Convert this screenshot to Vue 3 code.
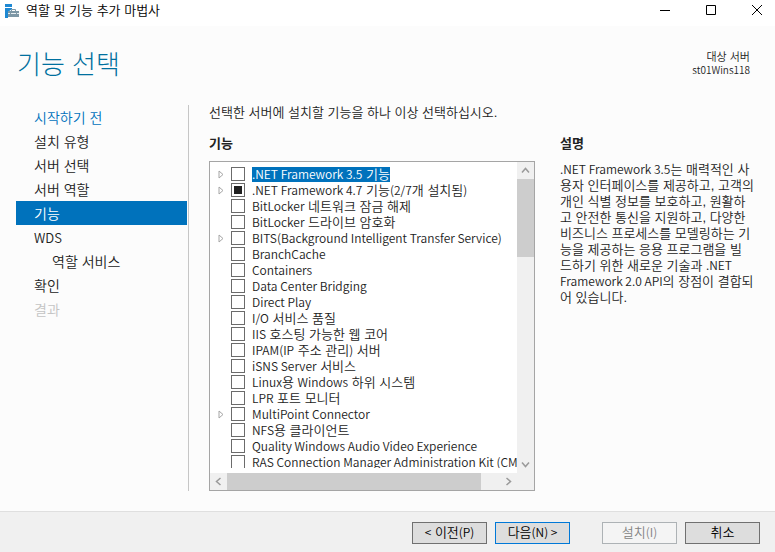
<template>
  <div class="wizard">
    <header class="title-bar">
      <svg class="app-icon" viewBox="0 0 15 15" aria-hidden="true">
        <path d="M0 0h7v3H0z" fill="#1e88d2" />
        <path d="M0 4h7v1L3 8v6H0z" fill="#1e88d2" />
        <path d="M6.500 7.500V5.500h4v2" fill="none" stroke="#7d97a5" />
        <path d="M3 7h11v6H3z" fill="#7d97a5" />
        <path d="M3 9.500h2M6 9.500h5M12 9.500h2" stroke="#e6edf0" />
      </svg>
      <span class="window-title">역할 및 기능 추가 마법사</span>
      <div class="window-controls">
        <button type="button" aria-label="최소화">
          <svg viewBox="0 0 12 12"><path d="M1 6.500h10" /></svg>
        </button>
        <button type="button" aria-label="최대화">
          <svg viewBox="0 0 12 12"><path d="M1.500 1.500h9v9h-9z" /></svg>
        </button>
        <button type="button" aria-label="닫기">
          <svg viewBox="0 0 12 12"><path d="M1 1l10 10M11 1L1 11" /></svg>
        </button>
      </div>
    </header>

    <div class="page-header">
      <h1>기능 선택</h1>
      <div class="target-server">
        <div>대상 서버</div>
        <div class="server-name">st01Wins118</div>
      </div>
    </div>

    <main class="content">
      <nav class="steps">
        <a
          v-for="step in steps"
          :key="step.name"
          href="#"
          class="step"
          :class="step.state"
          @click.prevent
        ><span v-for="(run, i) in toRuns(step.name)" :key="i" :class="run.script">{{ run.text }}</span></a>
      </nav>

      <section class="features">
        <p class="hint">선택한 서버에 설치할 기능을 하나 이상 선택하십시오.</p>
        <h2>기능</h2>
        <div class="tree">
          <div class="tree-view">
            <ul>
              <li v-for="feature in features" :key="feature.name">
                <button v-if="feature.expandable" type="button" class="expander" :aria-label="feature.name + ' 확장'">
                  <svg viewBox="0 0 6 9"><path d="M1 1v7l4-3.500z" /></svg>
                </button>
                <span v-else class="expander"></span>
                <label>
                  <input v-model="feature.checked" type="checkbox" :indeterminate="feature.partial" />
                  <span class="feature-name" :class="{ selected: feature.name === selected }"><span v-for="(run, i) in toRuns(feature.name)" :key="i" :class="run.script">{{ run.text }}</span></span>
                </label>
              </li>
            </ul>
          </div>
          <div class="scrollbar vertical">
            <button type="button" aria-label="위로"><svg viewBox="0 0 9 9"><path d="M1 6.500l3.500-4 3.500 4" /></svg></button>
            <div class="track"><div class="thumb"></div></div>
            <button type="button" aria-label="아래로"><svg viewBox="0 0 9 9"><path d="M1 2.500l3.500 4 3.500-4" /></svg></button>
          </div>
          <div class="scrollbar horizontal">
            <button type="button" aria-label="왼쪽으로"><svg viewBox="0 0 9 9"><path d="M6.500 1l-4 3.500 4 3.500" /></svg></button>
            <div class="track"><div class="thumb"></div></div>
            <button type="button" aria-label="오른쪽으로"><svg viewBox="0 0 9 9"><path d="M2.500 1l4 3.500-4 3.500" /></svg></button>
          </div>
          <div class="corner"></div>
        </div>
      </section>

      <aside class="description">
        <h2>설명</h2>
        <p><span v-for="(run, i) in toRuns(description)" :key="i" :class="run.script">{{ run.text }}</span></p>
      </aside>
    </main>

    <footer class="actions">
      <button v-for="action in actions" :key="action.label" type="button" :class="action.kind" :disabled="action.disabled">
        <span v-for="(run, i) in toRuns(action.label)" :key="i" :class="run.script">{{ run.text }}</span>
      </button>
    </footer>
  </div>
</template>

<script setup>
import { ref } from 'vue';

const steps = [
  { name: '시작하기 전', state: 'visited' },
  { name: '설치 유형' },
  { name: '서버 선택' },
  { name: '서버 역할' },
  { name: '기능', state: 'active' },
  { name: 'WDS' },
  { name: '역할 서비스', state: 'nested' },
  { name: '확인' },
  { name: '결과', state: 'disabled' }
];

const selected = '.NET Framework 3.5 기능';

const features = ref([
  { name: '.NET Framework 3.5 기능', expandable: true },
  { name: '.NET Framework 4.7 기능(2/7개 설치됨)', expandable: true, partial: true },
  { name: 'BitLocker 네트워크 잠금 해제' },
  { name: 'BitLocker 드라이브 암호화' },
  { name: 'BITS(Background Intelligent Transfer Service)', expandable: true },
  { name: 'BranchCache' },
  { name: 'Containers' },
  { name: 'Data Center Bridging' },
  { name: 'Direct Play' },
  { name: 'I/O 서비스 품질' },
  { name: 'IIS 호스팅 가능한 웹 코어' },
  { name: 'IPAM(IP 주소 관리) 서버' },
  { name: 'iSNS Server 서비스' },
  { name: 'Linux용 Windows 하위 시스템' },
  { name: 'LPR 포트 모니터' },
  { name: 'MultiPoint Connector', expandable: true },
  { name: 'NFS용 클라이언트' },
  { name: 'Quality Windows Audio Video Experience' },
  { name: 'RAS Connection Manager Administration Kit (CM' }
]);

const description = `.NET Framework 3.5는 매력적인 사
용자 인터페이스를 제공하고, 고객의
개인 식별 정보를 보호하고, 원활하
고 안전한 통신을 지원하고, 다양한
비즈니스 프로세스를 모델링하는 기
능을 제공하는 응용 프로그램을 빌
드하기 위한 새로운 기술과 .NET
Framework 2.0 API의 장점이 결합되
어 있습니다.`;

const actions = [
  { label: '< 이전(P)' },
  { label: '다음(N) >', kind: 'primary' },
  { label: '설치(I)', kind: 'install', disabled: true },
  { label: '취소' }
];

// 영문과 한글은 글자 크기가 다름
const toRuns = (text) => text
  .split(/([!-~]+(?: [!-~]+)*)/)
  .filter((part) => part)
  .map((part) => ({ text: part, script: /[A-Za-z0-9<>()]/.test(part) ? 'latin' : 'hangul' }));
</script>

<style>
body {
  background-color: #fcfcfc;
}
</style>

<style scoped>
.wizard {
  display: flex;
  flex-direction: column;
  height: 100vh;
  background-color: #fcfcfc;
  color: #222;
  font-family: 'Liberation Sans', 'Noto Sans CJK KR', sans-serif;
  font-size: 13px;
  font-weight: 350;
  line-height: 16px;
}

.latin {
  font-family: 'Noto Sans CJK KR', sans-serif;
  font-size: 12px;
  line-height: 12px;
}

h1,
h2,
p,
ul {
  margin: 0;
  padding: 0;
}

button {
  font: inherit;
  color: inherit;
}

.title-bar {
  display: flex;
  align-items: center;
  height: 26px;
  background-color: #fff;
  color: #000;
}

.app-icon {
  width: 15px;
  height: 15px;
  margin: 0 6px 4px 5px;
}

.window-title {
  padding-bottom: 4px;
}

.window-controls {
  display: flex;
  gap: 10px;
  margin-left: auto;
  padding-bottom: 6px;
}

.window-controls button {
  display: flex;
  align-items: center;
  justify-content: center;
  width: 36px;
  height: 20px;
  padding: 0;
  border: none;
  background: none;
}

.window-controls svg {
  width: 12px;
  height: 12px;
  fill: none;
  stroke: #000;
}

.page-header {
  display: flex;
  justify-content: space-between;
  height: 79px;
  padding: 23px 25px 0 17px;
  box-sizing: border-box;
}

h1 {
  color: #00709f;
  font-size: 26px;
  font-weight: 300;
  line-height: 32px;
}

.target-server {
  font-size: 11px;
  line-height: 14px;
  text-align: right;
  padding-top: 1px;
}

.server-name {
  font-family: 'Noto Sans CJK KR', sans-serif;
  font-size: 10px;
  line-height: 12px;
}

.content {
  display: grid;
  grid-template-columns: 173px 1fr 200px;
  flex: 1;
  min-height: 0;
  padding: 0 15px 20px 16px;
}

.steps {
  display: flex;
  flex-direction: column;
  padding-right: 1px;
  border-right: 1px solid #c6c6c6;
}

.step {
  padding: 2px 18px 0;
  color: #222;
  font-size: 14px;
  line-height: 22px;
  text-decoration: none;
}

.step .latin {
  font-size: 13px;
}

.step.visited {
  color: #0072bc;
}

.step.active {
  background-color: #0072bc;
  color: #fff;
}

.step.nested {
  padding-left: 36px;
}

.step.disabled {
  color: #c4c4c4;
}

.features {
  display: flex;
  flex-direction: column;
  min-width: 0;
  min-height: 0;
  margin: 0 25px 0 20px;
}

h2 {
  font-size: 13px;
  font-weight: 700;
}

.features h2 {
  margin: 15px 0 9px;
}

.tree {
  display: grid;
  grid-template-columns: 1fr 17px;
  grid-template-rows: 1fr 17px;
  flex: 1;
  min-height: 0;
  border: 1px solid #a5a5a5;
  background-color: #fff;
}

.tree-view {
  min-width: 0;
  min-height: 0;
  margin: 4px 0 5px;
  overflow: hidden;
}

.tree-view ul {
  list-style: none;
}

.tree-view li {
  display: flex;
  align-items: center;
  height: 16px;
  padding-left: 8px;
  white-space: nowrap;
}

.expander {
  display: flex;
  flex: none;
  width: 13px;
  padding: 0;
  border: none;
  background: none;
}

.expander svg {
  width: 6px;
  height: 9px;
  fill: none;
  stroke: #a6a6a6;
}

.tree-view label {
  display: flex;
  align-items: center;
  gap: 7px;
}

.tree-view input {
  appearance: none;
  flex: none;
  width: 14px;
  height: 14px;
  margin: 0;
  border: 1px solid #6b6b6b;
  background-color: #fff;
}

.tree-view input:indeterminate,
.tree-view input:checked {
  padding: 2px;
  background-color: #212121;
  background-clip: content-box;
}

.feature-name {
  height: 15px;
  line-height: 15px;
}

.feature-name.selected {
  background-color: #0072bc;
  color: #fff;
}

.scrollbar {
  display: flex;
  background-color: #f0f0f0;
}

.scrollbar.vertical {
  flex-direction: column;
}

.scrollbar button {
  display: flex;
  align-items: center;
  justify-content: center;
  width: 17px;
  height: 17px;
  padding: 0;
  border: none;
  background: none;
}

.scrollbar svg {
  width: 9px;
  height: 9px;
  fill: none;
  stroke: #9a9a9a;
  stroke-width: 1.5;
}

.track {
  flex: 1;
}

.thumb {
  background-color: #cdcdcd;
}

.vertical .thumb {
  height: 28%;
}

.horizontal .thumb {
  width: 93%;
  height: 100%;
}

.corner {
  background-color: #f0f0f0;
}

.description h2 {
  margin: 31px 0 10px;
}

.description p {
  white-space: pre-line;
}

.actions {
  display: flex;
  justify-content: flex-end;
  gap: 8px;
  padding: 10px 15px 8px;
  border-top: 1px solid #dfdfdf;
  background-color: #f0f0f0;
}

.actions button {
  width: 75px;
  height: 22px;
  padding: 0;
  border: 1px solid #707070;
  background-color: #ddd;
  color: #000;
  white-space: pre;
}

.actions .primary {
  border-color: #0078d7;
}

.actions .install {
  margin-left: 24px;
}

.actions button:disabled {
  border-color: #adb2b5;
  background-color: #f4f4f4;
  color: #838383;
}
</style>
